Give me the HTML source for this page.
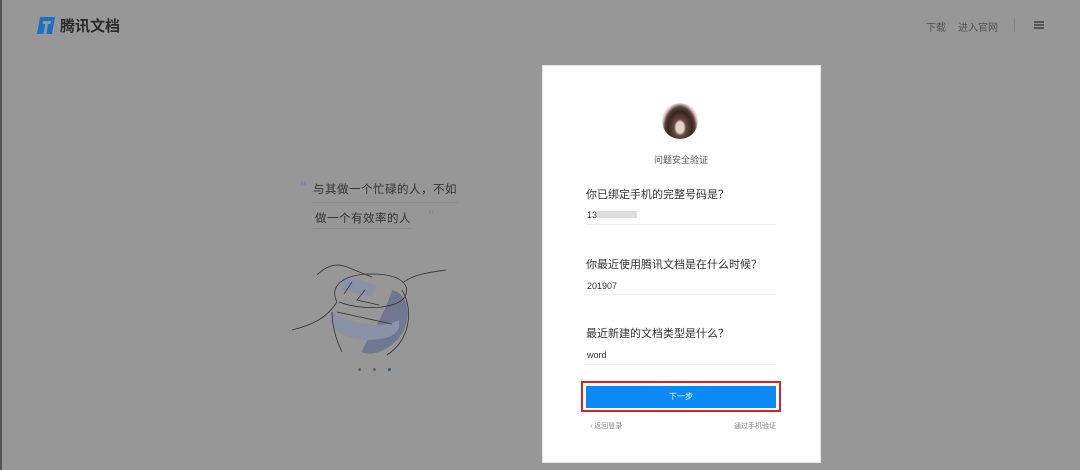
<!DOCTYPE html>
<html><head><meta charset="utf-8"><style>
body{margin:0;width:1080px;height:470px;background:#979797;position:relative;overflow:hidden;font-family:"Liberation Sans","Noto Sans CJK SC",sans-serif;}
.a{position:absolute;}
</style></head><body>
<div class="a" style="left:0;top:0;width:2px;height:470px;background:#555"></div>
<svg class="a" style="left:37px;top:17px" width="18" height="17" viewBox="0 0 18 17"><path d="M3 0H18L15 17H0L2 6Z" fill="#1a6fc9"/><path d="M6 4H14L13.4 7H11L9.4 17H6.6L8.2 7H5.6Z" fill="#979797"/></svg>
<div class="a" style="left:60px;top:15px;font-size:15px;color:#2a2a2a;font-weight:bold">腾讯文档</div>
<div class="a" style="left:926px;top:19px;font-size:10px;color:#555">下载</div>
<div class="a" style="left:958px;top:19px;font-size:10px;color:#555">进入官网</div>
<div class="a" style="left:1014px;top:18px;width:1px;height:14px;background:#888"></div>
<div class="a" style="left:1034px;top:21px;width:10px;height:2px;background:#555;box-shadow:0 3px 0 #555,0 6px 0 #555"></div>
<div class="a" style="left:300px;top:178px;font-size:14px;color:#7a8aa8;font-weight:bold">"</div>
<div class="a" style="left:313px;top:181px;font-size:11.5px;color:#333;letter-spacing:0.5px">与其做一个忙碌的人，不如</div>
<div class="a" style="left:313px;top:202px;width:145px;height:1px;background:#8c8c8c"></div>
<div class="a" style="left:315px;top:210px;font-size:11.5px;color:#333;letter-spacing:0.5px">做一个有效率的人</div>
<div class="a" style="left:428px;top:207px;font-size:14px;color:#7a8aa8;font-weight:bold">"</div>
<div class="a" style="left:313px;top:228px;width:100px;height:1px;background:#8c8c8c"></div>
<svg class="a" style="left:292px;top:250px" width="160" height="110" viewBox="0 0 160 110">
<path d="M100 40c20 5 20 35 5 50s-30 15-35 12c5-15 20-30 30-62z" fill="#6f7890"/>
<path d="M40 62c-5 10 0 25 35 28c20 0 35-5 32-20c-15 8-45 6-67-8z" fill="#8a92a8"/>
<path d="M50 28c15 0 30 5 35 8l-5 10c-8 0-20-4-30-6z" fill="#8a92a8"/>
<path d="M0 80c20-5 35-12 45-28M45 52c-8-15 5-28 35-28s40 12 32 24c-10 12-45 12-65 4M112 32c10-8 28-10 42-12M25 25c10-10 20-12 30-8l25 10M60 32l-8 12M73 40l-8 10l22 5M45 62l55 12M110 40c12 20 8 50-15 65M40 62c0 15 5 30 10 40" fill="none" stroke="#333" stroke-width="0.8"/>
</svg>
<div class="a" style="left:358px;top:368px;width:3px;height:3px;border-radius:50%;background:#666"></div>
<div class="a" style="left:373px;top:368px;width:3px;height:3px;border-radius:50%;background:#666"></div>
<div class="a" style="left:388px;top:368px;width:3px;height:3px;border-radius:50%;background:#1a5fb0"></div>
<div class="a" style="left:542px;top:65px;width:279px;height:398px;background:#fff;border:1px solid #e6e6e6;box-sizing:border-box"></div>
<div class="a" style="left:662px;top:103px;width:36px;height:36px;border-radius:50%;background:radial-gradient(ellipse at 50% 68%,#e8d0c8 0 4px,#6a4a40 6px,#3a2622 12px,#5a4038 15px,#ead8d4 18px)"></div>
<div class="a" style="left:654px;top:153px;font-size:9px;color:#555">问题安全验证</div>
<div class="a" style="left:586px;top:186px;font-size:11px;color:#333">你已绑定手机的完整号码是？</div>
<div class="a" style="left:587px;top:210px;font-size:9px;color:#333">13</div>
<div class="a" style="left:597px;top:211px;width:40px;height:7px;background:#ddd"></div>
<div class="a" style="left:586px;top:224px;width:190px;height:1px;background:#eee"></div>
<div class="a" style="left:586px;top:256px;font-size:11px;color:#333">你最近使用腾讯文档是在什么时候？</div>
<div class="a" style="left:587px;top:281px;font-size:9px;color:#333">201907</div>
<div class="a" style="left:586px;top:294px;width:190px;height:1px;background:#eee"></div>
<div class="a" style="left:586px;top:325px;font-size:11px;color:#333">最近新建的文档类型是什么？</div>
<div class="a" style="left:587px;top:350px;font-size:9px;color:#333">word</div>
<div class="a" style="left:586px;top:364px;width:190px;height:1px;background:#eee"></div>
<div class="a" style="left:581px;top:381px;width:200px;height:31px;border:2px solid #d2232a;box-sizing:border-box"></div>
<div class="a" style="left:586px;top:386px;width:190px;height:22px;background:#0b8af5;color:#fff;font-size:8px;text-align:center;line-height:22px">下一步</div>
<div class="a" style="left:590px;top:421px;font-size:7px;color:#888">‹ 返回登录</div>
<div class="a" style="left:734px;top:421px;font-size:7px;color:#888">通过手机验证</div>
</body></html>
